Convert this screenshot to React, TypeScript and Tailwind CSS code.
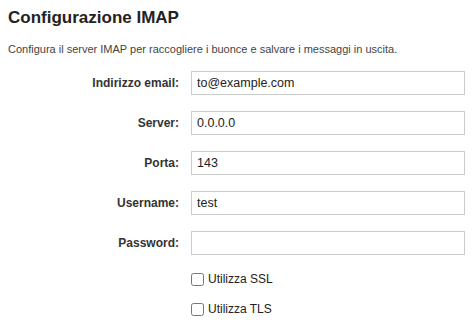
const fields = [
    { label: "Indirizzo email:", value: "to@example.com" },
    { label: "Server:", value: "0.0.0.0" },
    { label: "Porta:", value: "143" },
    { label: "Username:", value: "test" },
    { label: "Password:", value: "", type: "password" },
];

export default function App() {
    return (
        <div className="w-[474px] h-[330px] bg-white px-2 pt-[8px] text-[#333] font-['Liberation_Sans',Arial,sans-serif]">
            <h1 className="text-[17px] font-bold leading-[20px] text-[#222]">Configurazione IMAP</h1>
            <p className="mt-[14px] text-[11px] leading-[14px] text-[#444]">
                Configura il server IMAP per raccogliere i buonce e salvare i messaggi in uscita.
            </p>

            <form className="mt-[15px] grid grid-cols-[171px_274px] gap-x-3 gap-y-4 items-center">
                {fields.map((f) => (
                    <div key={f.label} className="contents">
                        <label className="text-right text-[12px] font-bold text-[#333]">{f.label}</label>
                        <input
                            type={f.type ?? "text"}
                            defaultValue={f.value}
                            className="h-6 border border-[#ccc] bg-white px-[5px] text-[12.5px] text-[#222] outline-none"
                        />
                    </div>
                ))}
            </form>

            <div className="ml-[183px] mt-[18px] flex flex-col gap-[17px]">
                <label className="flex items-center gap-[4px] text-[12px] leading-[13px] text-[#222]">
                    <input type="checkbox" className="size-[13px] m-0" />
                    Utilizza SSL
                </label>
                <label className="flex items-center gap-[4px] text-[12px] leading-[13px] text-[#222]">
                    <input type="checkbox" className="size-[13px] m-0" />
                    Utilizza TLS
                </label>
            </div>
        </div>
    );
}
